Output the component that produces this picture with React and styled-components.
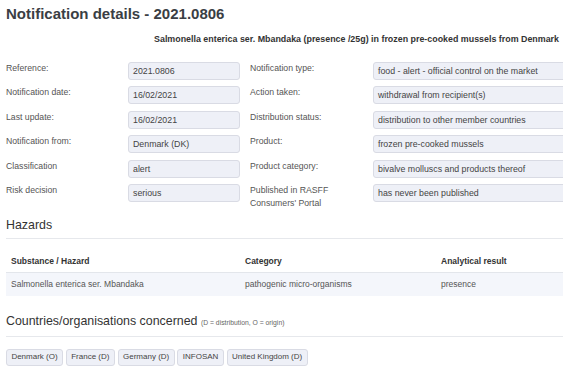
import React from "react";
import styled, { createGlobalStyle } from "styled-components";

const Global = createGlobalStyle`
  html, body { margin: 0; padding: 0; background: #ffffff; overflow: hidden; }
  body { font-family: "Liberation Sans", Arial, Helvetica, sans-serif; color: #444; }
`;

const Page = styled.div`
  width: 563px;
  padding: 5px 0 0 6px;
  box-sizing: border-box;
`;

const Title = styled.h1`
  margin: 0;
  font-size: 15px;
  line-height: 18px;
  font-weight: 700;
  color: #3a3e44;
`;

const Subtitle = styled.div`
  margin: 10px 4px 0 0;
  text-align: right;
  font-size: 8.9px;
  line-height: 12px;
  font-weight: 700;
  color: #333;
  white-space: nowrap;
`;

const Details = styled.div`
  display: grid;
  grid-template-columns: 122px 112px 133px 230px;
  row-gap: 6.4px;
  margin-top: 17px;
`;

const Label = styled.div`
  font-size: 8.7px;
  line-height: 13px;
  color: #555;
  padding-left: ${(p) => (p.$right ? "10px" : "0")};
  padding-right: 8px;
  align-self: start;
`;

const Field = styled.div`
  height: 18px;
  box-sizing: border-box;
  border: 1px solid #d9dbe4;
  border-radius: 3px;
  background: #eef0f7;
  padding: 0 4px;
  font-size: 8.8px;
  line-height: 16px;
  color: #444;
  white-space: nowrap;
`;

const SectionTitle = styled.h2`
  margin: ${(p) => p.$top} 0 0;
  padding-bottom: 5px;
  border-bottom: 1px solid #e6e8ec;
  font-size: 12.4px;
  line-height: 16px;
  font-weight: 400;
  color: #333;
  width: 600px;
`;

const Note = styled.small`
  font-size: 6.8px;
  color: #666;
`;

const Table = styled.table`
  margin-top: 11px;
  border-collapse: collapse;
  width: 640px;
  font-size: 8.5px;
`;

const Th = styled.th`
  text-align: left;
  font-weight: 700;
  color: #333;
  padding: 6px 5px 5px;
  line-height: 11px;
  border-bottom: 1px solid #e3e6eb;
  width: ${(p) => p.$w || "auto"};
`;

const Row = styled.tr`
  background: #f4f6fb;
`;

const Td = styled.td`
  padding: 6px 5px;
  line-height: 11px;
  color: #555;
`;

const Chips = styled.div`
  display: flex;
  gap: 2.8px;
  margin-top: 12.5px;
`;

const Chip = styled.span`
  box-sizing: border-box;
  height: 16.6px;
  border: 1px solid #d9dbe4;
  border-radius: 3px;
  background: #eef0f7;
  padding: 0 4.4px;
  font-size: 8px;
  line-height: 14.6px;
  color: #444;
  white-space: nowrap;
`;

const rows = [
  ["Reference:", "2021.0806", "Notification type:", "food - alert - official control on the market"],
  ["Notification date:", "16/02/2021", "Action taken:", "withdrawal from recipient(s)"],
  ["Last update:", "16/02/2021", "Distribution status:", "distribution to other member countries"],
  ["Notification from:", "Denmark (DK)", "Product:", "frozen pre-cooked mussels"],
  ["Classification", "alert", "Product category:", "bivalve molluscs and products thereof"],
  ["Risk decision", "serious", "Published in RASFF Consumers' Portal", "has never been published"],
];

const countries = ["Denmark (O)", "France (D)", "Germany (D)", "INFOSAN", "United Kingdom (D)"];

export default function App() {
  return (
    <>
      <Global />
      <Page>
        <Title>Notification details - 2021.0806</Title>
        <Subtitle>
          Salmonella enterica ser. Mbandaka (presence /25g) in frozen pre-cooked mussels from Denmark
        </Subtitle>
        <Details>
          {rows.map((r) => (
            <React.Fragment key={r[0]}>
              <Label>{r[0]}</Label>
              <Field>{r[1]}</Field>
              <Label $right>{r[2]}</Label>
              <Field>{r[3]}</Field>
            </React.Fragment>
          ))}
        </Details>
        <SectionTitle $top="7px">Hazards</SectionTitle>
        <Table>
          <thead>
            <tr>
              <Th $w="224px">Substance / Hazard</Th>
              <Th $w="186px">Category</Th>
              <Th>Analytical result</Th>
            </tr>
          </thead>
          <tbody>
            <Row>
              <Td>Salmonella enterica ser. Mbandaka</Td>
              <Td>pathogenic micro-organisms</Td>
              <Td>presence</Td>
            </Row>
          </tbody>
        </Table>
        <SectionTitle $top="17px">
          Countries/organisations concerned <Note>(D = distribution, O = origin)</Note>
        </SectionTitle>
        <Chips>
          {countries.map((c) => (
            <Chip key={c}>{c}</Chip>
          ))}
        </Chips>
      </Page>
    </>
  );
}
